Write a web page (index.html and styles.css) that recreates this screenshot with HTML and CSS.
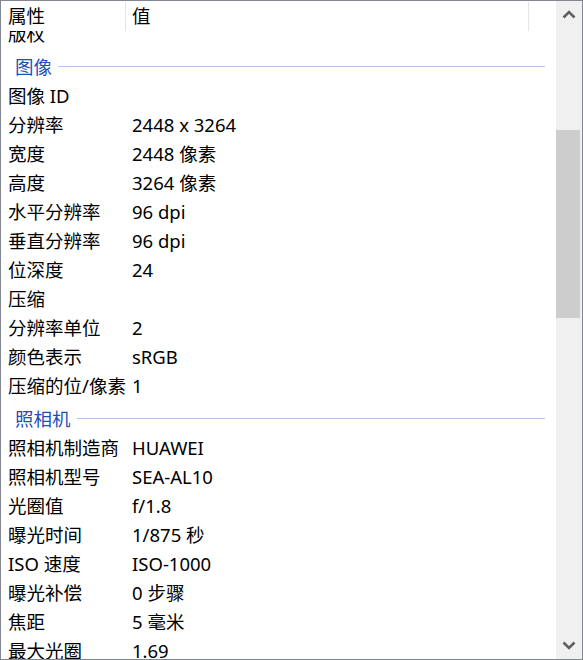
FILE: index.html
```html
<!DOCTYPE html>
<html lang="zh-CN">
<head>
<meta charset="utf-8">
<link rel="stylesheet" href="styles.css">
</head>
<body>
<div class="frame">
  <div class="main">
    <div class="header">
      <div class="hcell c1">属性</div>
      <div class="hcell c2">值</div>
      <div class="hcell c3"></div>
    </div>
    <div class="viewport">
      <div class="list">
        <div class="row"><span class="k">版权</span><span class="v"></span></div>
        <div class="group"><span class="gt">图像</span><span class="gl"></span></div>
        <div class="row"><span class="k">图像 ID</span><span class="v"></span></div>
        <div class="row"><span class="k">分辨率</span><span class="v">2448 x 3264</span></div>
        <div class="row"><span class="k">宽度</span><span class="v">2448 像素</span></div>
        <div class="row"><span class="k">高度</span><span class="v">3264 像素</span></div>
        <div class="row"><span class="k">水平分辨率</span><span class="v">96 dpi</span></div>
        <div class="row"><span class="k">垂直分辨率</span><span class="v">96 dpi</span></div>
        <div class="row"><span class="k">位深度</span><span class="v">24</span></div>
        <div class="row"><span class="k">压缩</span><span class="v"></span></div>
        <div class="row"><span class="k">分辨率单位</span><span class="v">2</span></div>
        <div class="row"><span class="k">颜色表示</span><span class="v">sRGB</span></div>
        <div class="row"><span class="k">压缩的位/像素</span><span class="v">1</span></div>
        <div class="group"><span class="gt">照相机</span><span class="gl"></span></div>
        <div class="row"><span class="k">照相机制造商</span><span class="v">HUAWEI</span></div>
        <div class="row"><span class="k">照相机型号</span><span class="v">SEA-AL10</span></div>
        <div class="row"><span class="k">光圈值</span><span class="v">f/1.8</span></div>
        <div class="row"><span class="k">曝光时间</span><span class="v">1/875 秒</span></div>
        <div class="row"><span class="k">ISO 速度</span><span class="v">ISO-1000</span></div>
        <div class="row"><span class="k">曝光补偿</span><span class="v">0 步骤</span></div>
        <div class="row"><span class="k">焦距</span><span class="v">5 毫米</span></div>
        <div class="row"><span class="k">最大光圈</span><span class="v">1.69</span></div>
        <div class="row"><span class="k">测光模式</span><span class="v">图案</span></div>
      </div>
    </div>
  </div>
  <div class="scrollbar">
    <div class="arrow up">
      <svg width="14" height="10" viewBox="0 0 14 10"><polyline points="1.5,8.5 7,3 12.5,8.5" fill="none" stroke="#606060" stroke-width="2.6"/></svg>
    </div>
    <div class="track">
      <div class="thumb"></div>
    </div>
    <div class="arrow down">
      <svg width="14" height="10" viewBox="0 0 14 10"><polyline points="1.5,1.5 7,7 12.5,1.5" fill="none" stroke="#606060" stroke-width="2.6"/></svg>
    </div>
  </div>
</div>
</body>
</html>
```

FILE: styles.css
```css
html, body {
  margin: 0;
  padding: 0;
  background: #ffffff;
}

.frame {
  width: 583px;
  height: 660px;
  box-sizing: border-box;
  border: 1px solid #828790;
  display: flex;
  background: #ffffff;
  font-family: "Noto Sans", "Noto Sans CJK SC", sans-serif;
  font-size: 18.5px;
  color: #000000;
  overflow: hidden;
}

.main {
  width: 555px;
  display: flex;
  flex-direction: column;
  min-width: 0;
}

.header {
  height: 30px;
  display: flex;
  flex: none;
  background: #ffffff;
  position: relative;
  z-index: 1;
}

.hcell {
  height: 29px;
  margin-top: 1px;
  line-height: 28px;
  box-sizing: border-box;
  white-space: nowrap;
}

.hcell.c1 {
  width: 125px;
  padding-left: 7px;
  border-right: 1px solid #e5e5e5;
}

.hcell.c2 {
  width: 403px;
  padding-left: 6px;
  border-right: 1px solid #e5e5e5;
}

.hcell.c3 {
  flex: 1;
}

.viewport {
  flex: 1;
  overflow: hidden;
}

.list {
  margin-top: -12px;
}

.row {
  height: 29px;
  line-height: 29px;
  display: flex;
  white-space: nowrap;
}

.row .k {
  width: 124px;
  padding-left: 7px;
  box-sizing: border-box;
}

.row .v {
  padding-left: 7px;
}

.group {
  box-sizing: border-box;
  padding-top: 4px;
  padding-left: 14px;
  padding-right: 11px;
  display: flex;
  align-items: center;
  line-height: 29px;
  height: 33px;
}

.group .gt {
  color: #1f4fb8;
  white-space: nowrap;
}

.group .gl {
  flex: 1;
  height: 1px;
  background: #b4c4ec;
  margin-left: 6px;
  margin-top: -1px;
}

.scrollbar {
  width: 26px;
  background: #f0f0f0;
  display: flex;
  flex-direction: column;
}

.arrow {
  height: 26px;
  display: flex;
  align-items: center;
  justify-content: center;
  flex: none;
}

.arrow svg {
  display: block;
}

.track {
  flex: 1;
}

.thumb {
  margin-top: 103px;
  width: 24px;
  height: 188px;
  background: #cdcdcd;
}
```
